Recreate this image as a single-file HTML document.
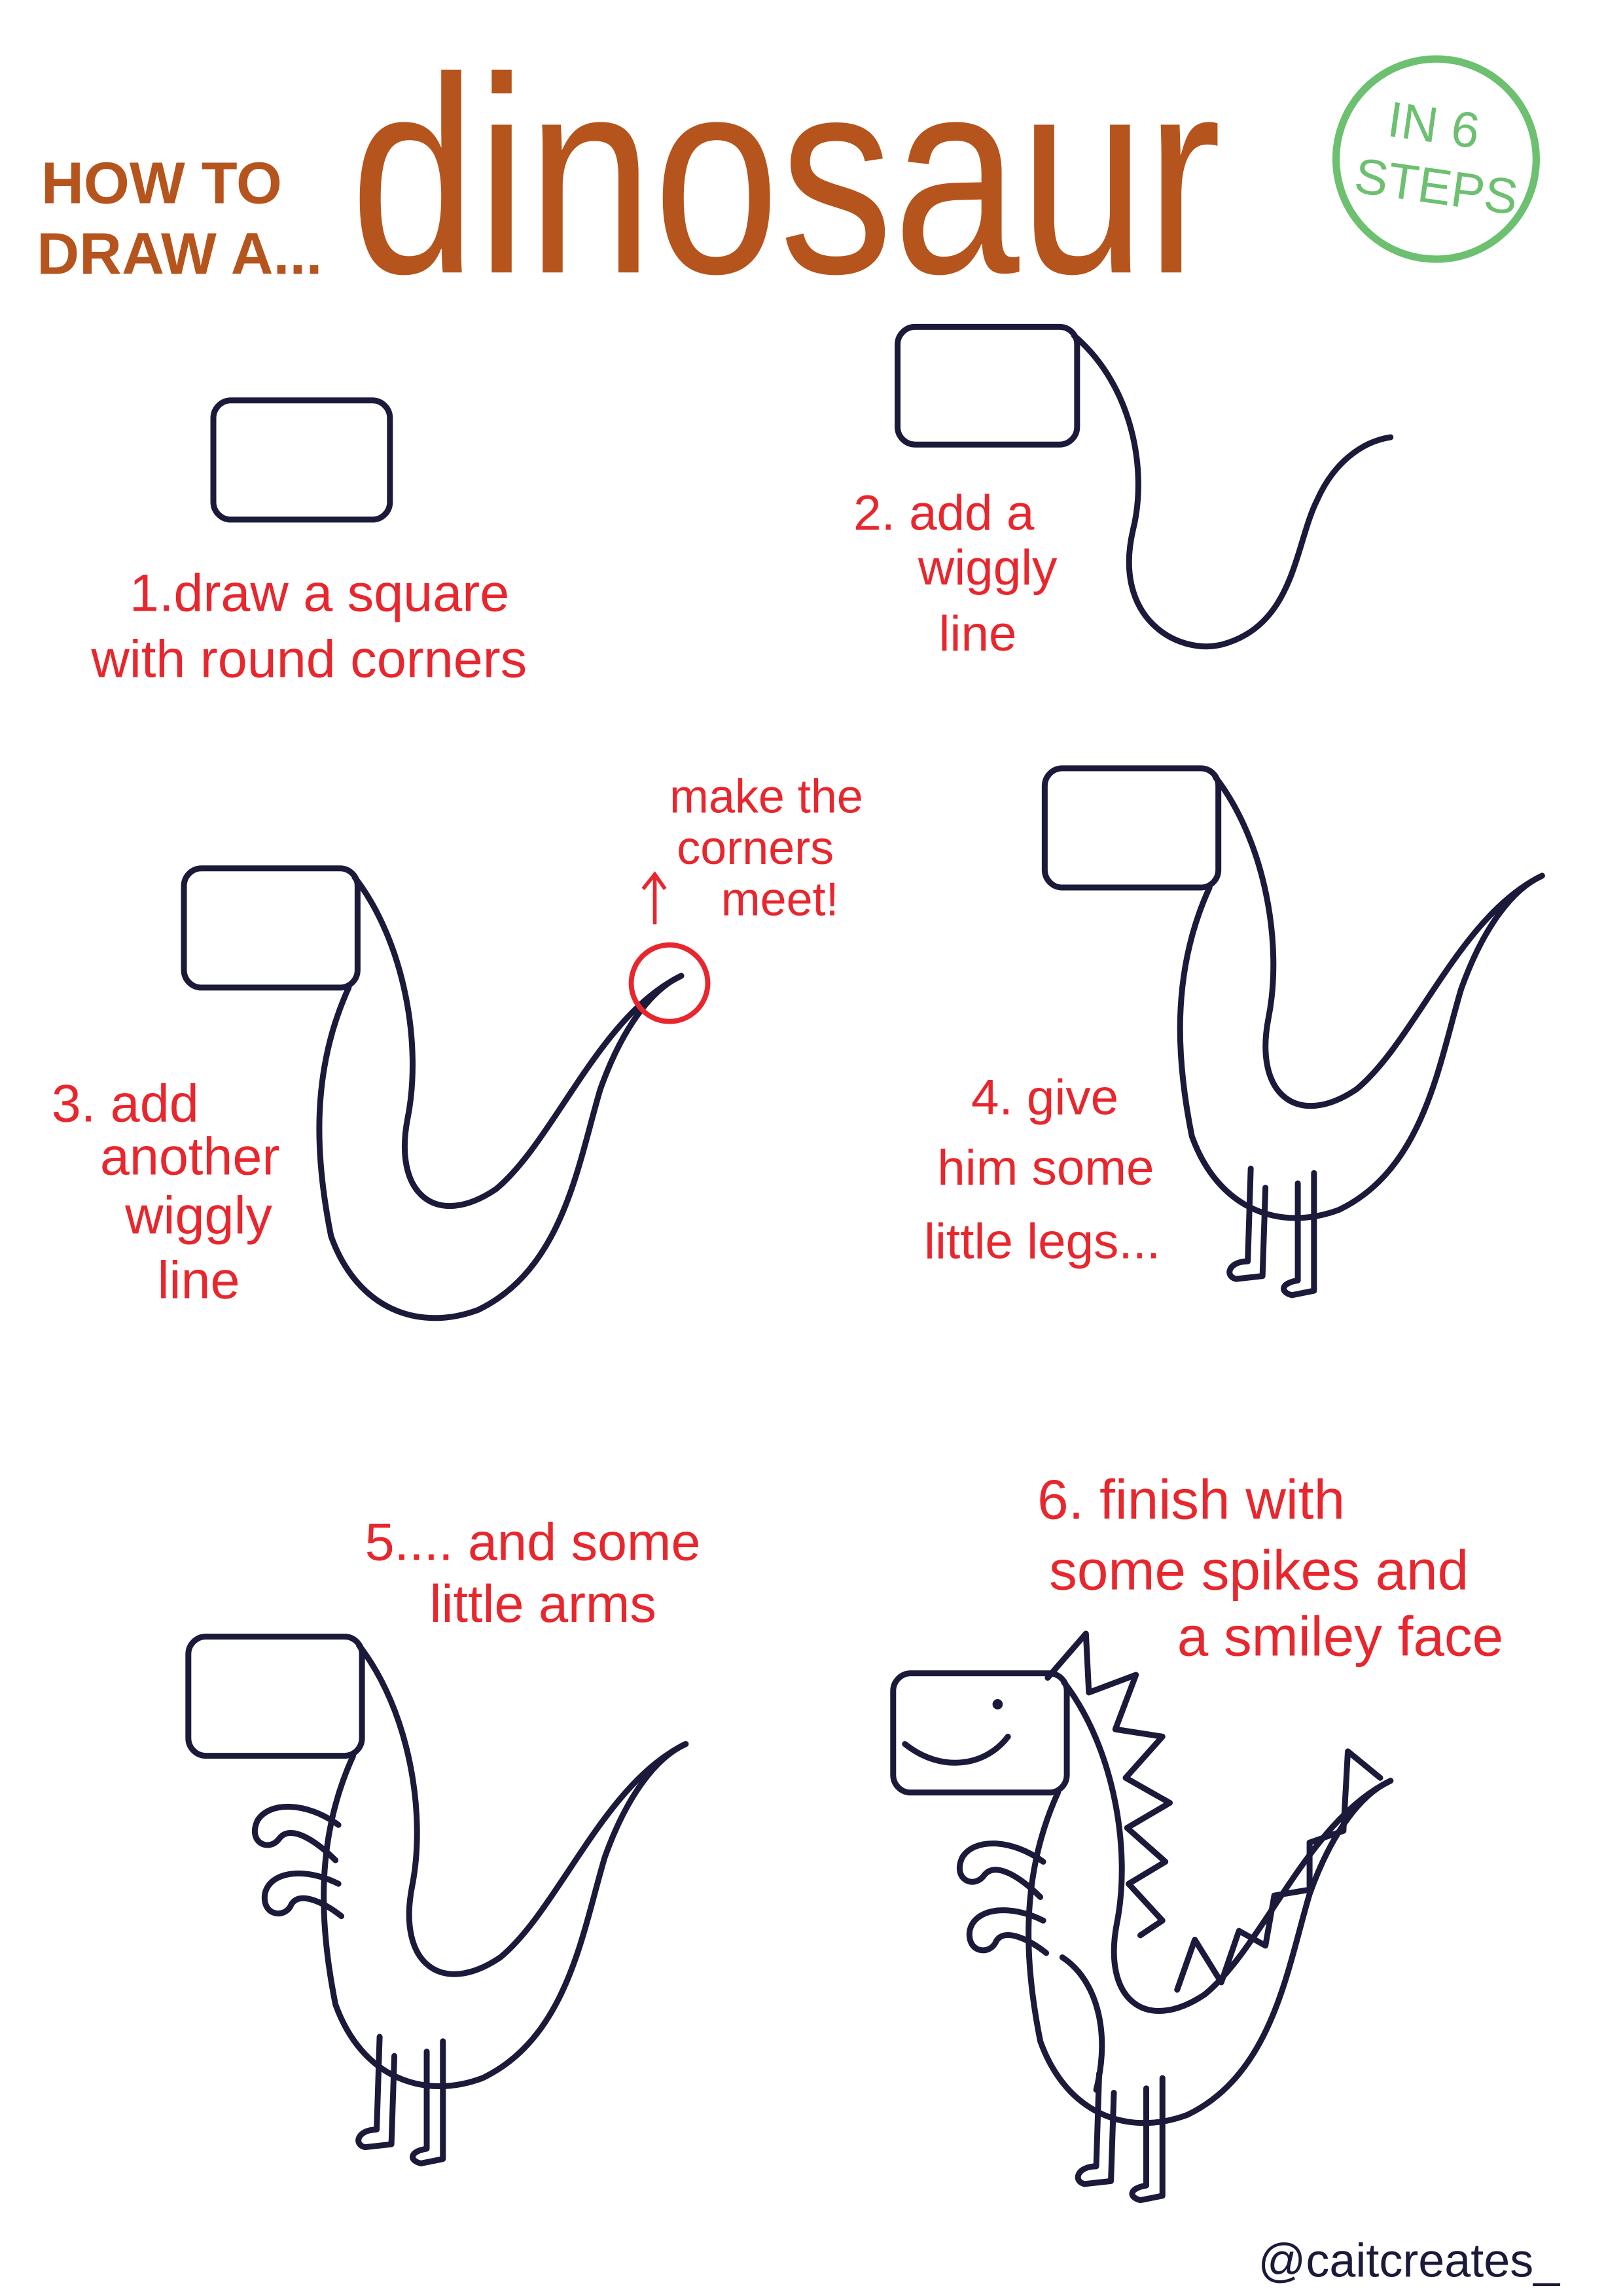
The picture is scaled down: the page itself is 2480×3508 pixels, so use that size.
<!DOCTYPE html>
<html><head><meta charset="utf-8"><style>
html,body{margin:0;padding:0;background:#fff;}
svg{display:block;}
text{font-family:"Liberation Sans",sans-serif;}
</style></head><body>
<svg width="2480" height="3508" viewBox="0 0 1103 1560" xmlns="http://www.w3.org/2000/svg">
<defs>
<g id="dino" fill="none" stroke="#1c1a3a" stroke-width="4" stroke-linecap="round" stroke-linejoin="round">
<rect x="0" y="0" width="118" height="81" rx="12"/>
<path d="M116,6 C150,50 162,120 152,170 C142,222 172,245 212,218 C252,185 282,100 338,73"/>
<path d="M112,81 C85,140 90,200 100,250 C118,300 160,315 200,300 C258,272 268,200 283,150 C298,108 318,82 338,73"/>
</g>
<g id="legs" fill="none" stroke="#1c1a3a" stroke-width="4" stroke-linecap="round" stroke-linejoin="round">
<path d="M140,272 L138,335 C125,335 122,345 130,347 L148,345 L150,285"/>
<path d="M172,282 L172,348 C160,350 160,356 168,358 L183,355 L183,275"/>
</g>
<g id="arms" fill="none" stroke="#1c1a3a" stroke-width="4" stroke-linecap="round" stroke-linejoin="round">
<path d="M102,128 C80,112 55,112 47,125 C40,140 55,147 62,137 C70,127 88,140 100,152"/>
<path d="M102,168 C78,156 55,160 52,175 C50,190 66,192 70,182 C76,172 94,182 104,190"/>
</g>
</defs>

<text x="28" y="138" font-size="40" fill="#b5541c" font-weight="bold">HOW TO</text>
<text x="25" y="186" font-size="40" fill="#b5541c" font-weight="bold">DRAW A...</text>
<text x="238" y="185" font-size="190" fill="#b5541c" textLength="592" lengthAdjust="spacingAndGlyphs">dinosaur</text>
<circle cx="976" cy="108" r="68" fill="none" stroke="#6cc070" stroke-width="5"/>
<text x="940" y="97" font-size="34" fill="#6cc070" transform="rotate(8 976 108)">IN 6</text>
<text x="923" y="138" font-size="34" fill="#6cc070" transform="rotate(8 976 108)">STEPS</text>

<rect x="145" y="272" width="120" height="81" rx="12" fill="none" stroke="#1c1a3a" stroke-width="4"/>
<text x="88" y="415" font-size="36" fill="#e8262d">1.draw a square</text>
<text x="62" y="460" font-size="36" fill="#e8262d">with round corners</text>

<rect x="610" y="222" width="122" height="80" rx="12" fill="none" stroke="#1c1a3a" stroke-width="4"/>
<path d="M730,228 C770,262 780,320 770,360 C756,420 800,445 830,438 C880,425 880,370 895,340 C906,315 925,300 945,297" fill="none" stroke="#1c1a3a" stroke-width="4" stroke-linecap="round"/>
<text x="580" y="360" font-size="34" fill="#e8262d">2. add a</text>
<text x="624" y="397" font-size="34" fill="#e8262d">wiggly</text>
<text x="638" y="442" font-size="34" fill="#e8262d">line</text>

<use href="#dino" transform="translate(125,590)"/>
<circle cx="455" cy="668" r="26" fill="none" stroke="#e8262d" stroke-width="3.5"/>
<path d="M445,628 L445,596 M437,604 L445,594 L452,604" fill="none" stroke="#e8262d" stroke-width="2.5"/>
<text x="455" y="552" font-size="32" fill="#e8262d">make the</text>
<text x="460" y="587" font-size="32" fill="#e8262d">corners</text>
<text x="490" y="622" font-size="32" fill="#e8262d">meet!</text>
<text x="35" y="762" font-size="36" fill="#e8262d">3. add</text>
<text x="68" y="798" font-size="36" fill="#e8262d">another</text>
<text x="85" y="838" font-size="36" fill="#e8262d">wiggly</text>
<text x="107" y="882" font-size="36" fill="#e8262d">line</text>

<use href="#dino" transform="translate(710,522)"/>
<use href="#legs" transform="translate(710,522)"/>
<text x="660" y="757" font-size="34" fill="#e8262d">4. give</text>
<text x="637" y="805" font-size="34" fill="#e8262d">him some</text>
<text x="628" y="855" font-size="34" fill="#e8262d">little legs...</text>

<use href="#dino" transform="translate(128,1112)"/>
<use href="#legs" transform="translate(118,1112)"/>
<use href="#arms" transform="translate(128,1112)"/>
<text x="248" y="1060" font-size="36" fill="#e8262d">5.... and some</text>
<text x="292" y="1102" font-size="36" fill="#e8262d">little arms</text>

<use href="#dino" transform="translate(607,1137)"/>
<use href="#legs" transform="translate(607,1137)"/>
<use href="#arms" transform="translate(607,1137)"/>
<circle cx="678" cy="1158" r="3.5" fill="#1c1a3a"/>
<path d="M615,1185 C640,1205 670,1200 685,1180" fill="none" stroke="#1c1a3a" stroke-width="4" stroke-linecap="round"/>
<path d="M712,1140 L738,1110 L740,1150 L772,1138 L758,1175 L790,1180 L765,1208 L795,1225 L766,1242 L792,1265 L767,1280 L790,1305 L775,1315" fill="none" stroke="#1c1a3a" stroke-width="4" stroke-linejoin="round" stroke-linecap="round"/>
<path d="M800,1352 L812,1318 L830,1347 L842,1312 L860,1322 L866,1288 L890,1284 L890,1252 L913,1244 L916,1190 L938,1208" fill="none" stroke="#1c1a3a" stroke-width="4" stroke-linejoin="round" stroke-linecap="round"/>
<path d="M722,1330 C745,1345 755,1380 745,1420" fill="none" stroke="#1c1a3a" stroke-width="4" stroke-linecap="round"/>
<text x="705" y="1032" font-size="38" fill="#e8262d">6. finish with</text>
<text x="713" y="1080" font-size="38" fill="#e8262d">some spikes and</text>
<text x="800" y="1125" font-size="38" fill="#e8262d">a smiley face</text>

<text x="855" y="1547" font-size="32" fill="#1c1a3a">@caitcreates_</text>
</svg>
</body></html>
